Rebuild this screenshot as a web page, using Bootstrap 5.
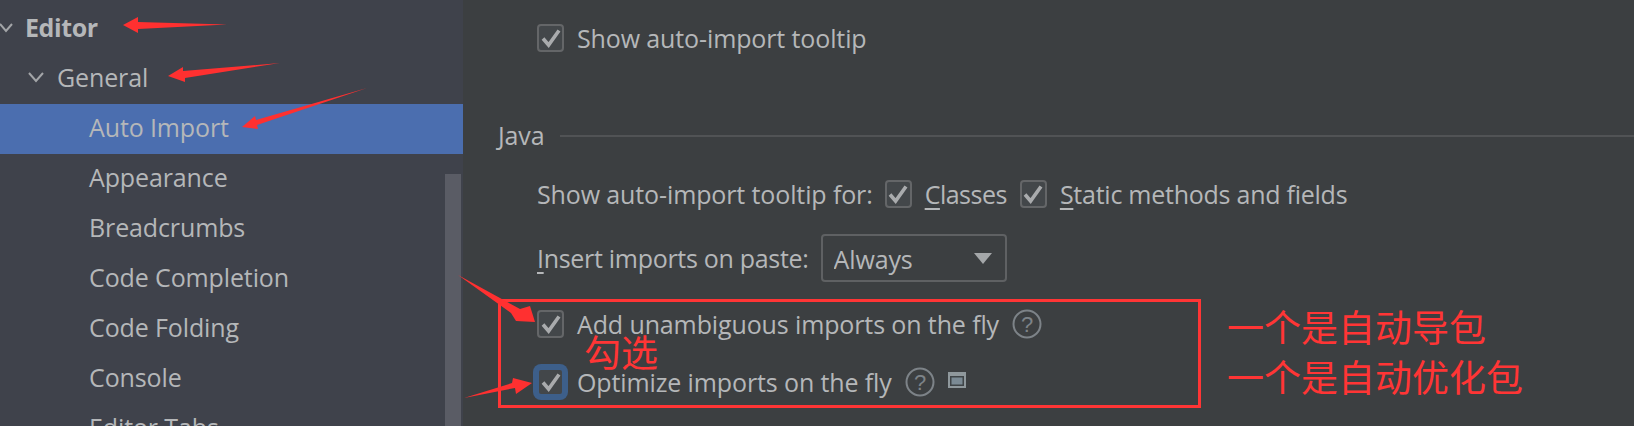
<!DOCTYPE html>
<html lang="zh">
<head>
  <meta charset="UTF-8" />
  <meta name="viewport" content="width=device-width, initial-scale=1.0"/>
  <title>Auto Import</title>
  <link href="https://cdn.jsdelivr.net/npm/bootstrap@5.3.3/dist/css/bootstrap.min.css" rel="stylesheet"/>
  <style>
    html, body { height: 426px; overflow: hidden; }
    body { background: #3c3f41; color: #b5b7b9; font-family: "Open Sans", "Noto Sans", sans-serif; font-size: 25px; letter-spacing: -0.12px; }
    u { text-underline-offset: 4px; }
    .ide-shell { height: 426px; position: relative; overflow: hidden; }
    .tree-pane { width: 463px; flex: none; background: #3f424b; padding-top: 4px; position: relative; }
    .tree-row { height: 50px; padding-bottom: 3px; white-space: nowrap; }
    .tree-row.picked { background: #4b6eaf; }
    .tree-row.lvl0 { font-weight: 700; padding-left: 25px; letter-spacing: -0.4px; }
    .tree-row.lvl1 { padding-left: 28px; }
    .tree-row.lvl2 { padding-left: 89px; }
    .tree-chev { width: 16px; height: 12px; flex: none; }
    .lvl0 .tree-chev { width: 13px; margin-left: -25px; margin-right: 12px; }
    .lvl1 .tree-chev { margin-right: 13px; }
    .tree-thumb { position: absolute; left: 445px; top: 174px; bottom: 0; width: 16px; background: #5a5c65; }
    .form-pane { flex: 1; min-width: 0; padding-left: 34px; }
    .opt-row { height: 28px; padding-left: 40px; white-space: nowrap; }
    .opt-row > span { padding-top: 2px; }
    .sec-head { height: 28px; margin-top: 70px; padding-left: 1px; }
    .sec-line { height: 2px; background: #515355; margin-left: 15px; }
    .tip-row { margin-top: 30px; }
    .classes-lbl { letter-spacing: -0.5px; }
    .static-lbl { letter-spacing: -0.25px; }
    .paste-row { height: 48px; margin-top: 26px; }
    .paste-lbl { letter-spacing: -0.3px; }
    .box-row { margin-top: 17px; }
    .row-gap-top { margin-top: 30px; }
    .form-check-input.ide-check {
      width: 27px; height: 28px; margin: 0 13px 0 0; flex: none; float: none;
      background-color: #43474a; border: 2px solid #646668; border-radius: 4px;
      background-size: 20px 20px; background-position: center; background-repeat: no-repeat;
      background-image: url("data:image/svg+xml,%3csvg xmlns='http://www.w3.org/2000/svg' viewBox='0 0 20 20'%3e%3cpath fill='none' stroke='%23a9abad' stroke-width='3.6' d='M2 10.5l5.6 6.5L18 2.5'/%3e%3c/svg%3e");
    }
    .form-check-input.ide-check.focused { box-shadow: 0 0 0 4px #3d5f8a; border-color: #3d5f8a; }
    .tip-row .ide-check { margin-left: 12px; }
    .tip-row .ide-check.next-check { margin-left: 13px; }
    .ide-combo.form-select {
      width: 186px; height: 48px; margin-left: 12px; padding: 3px 0 0 11px; font-size: inherit; letter-spacing: inherit;
      background-color: #3c3f41; color: #b5b7b9; border: 2px solid #5f6163; border-radius: 4px;
      background-size: 18px 11px; background-position: right 13px center;
      background-image: url("data:image/svg+xml,%3csvg xmlns='http://www.w3.org/2000/svg' viewBox='0 0 18 11'%3e%3cpath fill='%23a4a7a9' d='M0 0h18l-9 11z'/%3e%3c/svg%3e");
    }
    .pick-frame { width: 703px; height: 109px; margin-left: 1px; border: 3px solid #ff3535; padding: 8px 0 0 36px; position: relative; flex: none; }
    .pick-frame .opt-row { padding-left: 0; }
    .note-text { color: #ff3535; font-family: "Liberation Sans", "Noto Sans CJK SC", sans-serif; font-size: 37px; line-height: 50px; letter-spacing: 0; white-space: nowrap; }
    .note-col { margin-left: 26px; margin-top: 2px; }
    .note-tick { position: absolute; left: 83px; top: 34px; line-height: 37px; }
    .help-mark { width: 30px; height: 30px; flex: none; margin-left: 13px; }
    .float-mark { width: 18px; height: 16px; flex: none; margin-left: 13px; margin-top: -4px; }
    .arrow-layer { position: absolute; left: 0; top: 0; width: 1634px; height: 426px; pointer-events: none; }
  </style>
</head>
<body>
  <div class="ide-shell d-flex">
    <div class="tree-pane">
      <div class="tree-row lvl0 d-flex align-items-center">
        <svg class="tree-chev" viewBox="0 0 13 12"><path d="M0 2l6 7 6-7" fill="none" stroke="#a3a5a8" stroke-width="2"/></svg>
        Editor
      </div>
      <div class="tree-row lvl1 d-flex align-items-center">
        <svg class="tree-chev" viewBox="0 0 16 12"><path d="M1 1l7 8 7-8" fill="none" stroke="#a3a5a8" stroke-width="2"/></svg>
        General
      </div>
      <div class="tree-row lvl2 picked d-flex align-items-center">Auto Import</div>
      <div class="tree-row lvl2 d-flex align-items-center">Appearance</div>
      <div class="tree-row lvl2 d-flex align-items-center">Breadcrumbs</div>
      <div class="tree-row lvl2 d-flex align-items-center">Code Completion</div>
      <div class="tree-row lvl2 d-flex align-items-center">Code Folding</div>
      <div class="tree-row lvl2 d-flex align-items-center">Console</div>
      <div class="tree-row lvl2 d-flex align-items-center">Editor Tabs</div>
      <div class="tree-thumb"></div>
    </div>

    <div class="form-pane">
      <div class="opt-row d-flex align-items-center mt-4">
        <input class="form-check-input ide-check" type="checkbox" checked/>
        <span>Show auto-import tooltip</span>
      </div>

      <div class="sec-head d-flex align-items-center">
        <span>Java</span>
        <div class="sec-line flex-grow-1"></div>
      </div>

      <div class="opt-row d-flex align-items-center tip-row">
        <span>Show auto-import tooltip for:</span>
        <input class="form-check-input ide-check" type="checkbox" checked/>
        <span class="classes-lbl"><u>C</u>lasses</span>
        <input class="form-check-input ide-check next-check" type="checkbox" checked/>
        <span class="static-lbl"><u>S</u>tatic methods and fields</span>
      </div>

      <div class="opt-row d-flex align-items-center paste-row">
        <span class="paste-lbl"><u>I</u>nsert imports on paste:</span>
        <select class="form-select ide-combo"><option>Always</option></select>
      </div>

      <div class="d-flex align-items-center box-row">
        <div class="pick-frame">
          <div class="opt-row d-flex align-items-center">
            <input class="form-check-input ide-check" type="checkbox" checked/>
            <span>Add unambiguous imports on the fly</span>
            <svg class="help-mark" viewBox="0 0 30 30"><circle cx="15" cy="15" r="13.5" fill="none" stroke="#7d8388" stroke-width="2"/><text x="15" y="23" text-anchor="middle" font-size="22" font-family="Liberation Sans" fill="#7d8388">?</text></svg>
          </div>
          <div class="opt-row d-flex align-items-center row-gap-top">
            <input class="form-check-input ide-check focused" type="checkbox" checked/>
            <span>Optimize imports on the fly</span>
            <svg class="help-mark" viewBox="0 0 30 30"><circle cx="15" cy="15" r="13.5" fill="none" stroke="#7d8388" stroke-width="2"/><text x="15" y="23" text-anchor="middle" font-size="22" font-family="Liberation Sans" fill="#7d8388">?</text></svg>
            <svg class="float-mark" viewBox="0 0 18 16"><path fill="#8f989c" d="M0 0h18v16H0z"/><path fill="#3f4447" d="M2 4h14v10H2z"/><path fill="#7b8a94" d="M3.5 5.5h11v7h-11z"/></svg>
          </div>
          <div class="note-text note-tick">勾选</div>
        </div>
        <div class="note-text note-col">
          <div>一个是自动导包</div>
          <div>一个是自动优化包</div>
        </div>
      </div>
    </div>

    <svg class="arrow-layer" viewBox="0 0 1634 426">
      <g fill="#ff3030">
        <polygon points="123,25 138,17 138,22 227,24.5 138,29 138,33"/>
        <polygon points="168,76 183,67 183,71 280,63 185,78 185,82"/>
        <polygon points="242,127 255,116 256,120 367,88 257,125 258,129"/>
        <polygon points="458,275 520,309 530,306 535,322 516,321 511,313"/>
        <polygon points="464,398 512,383 513,378 532,383 516,394 515,388"/>
      </g>
    </svg>
  </div>
  <script src="https://cdn.jsdelivr.net/npm/bootstrap@5.3.3/dist/js/bootstrap.bundle.min.js"></script>
</body>
</html>
